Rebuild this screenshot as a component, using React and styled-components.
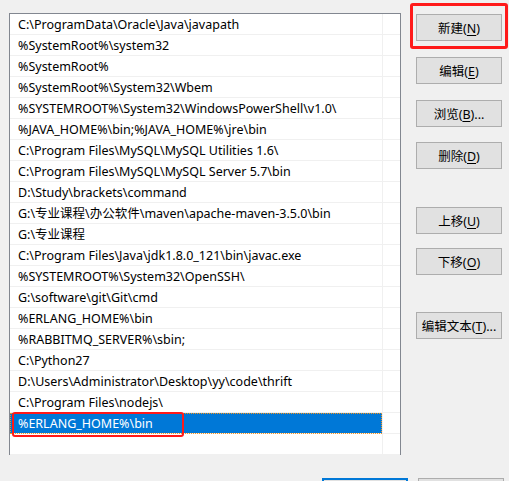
import React from 'react'
import styled, { createGlobalStyle } from 'styled-components'

const GlobalStyle = createGlobalStyle`
  html, body {
    margin: 0;
    background: #f0f0f0;
    overflow: hidden;
  }
  body {
    font-family: "Noto Sans", "Noto Sans CJK SC", sans-serif;
    font-size: 12.5px;
    color: #000;
  }
`;

const Window = styled.div`
  width: 509px;
  height: 481px;
  position: relative;
  display: flex;
  flex-direction: column;
  padding: 13px 0 0 9px;
  box-sizing: border-box;
`;

const Main = styled.div`
  display: flex;
  align-items: flex-start;
`;

const List = styled.div`
  width: 392px;
  height: 442px;
  box-sizing: border-box;
  border: 1px solid #828790;
  background: #fff;
  display: flex;
  flex-direction: column;
  position: relative;
`;

const Row = styled.div`
  display: grid;
  grid-template-columns: 372px 1fr;
  height: 21px;
  flex: none;
`;

const Cell = styled.div`
  box-sizing: border-box;
  height: 21px;
  border-bottom: 1px solid #f0f0f0;
  padding: 1px 0 0 8px;
  line-height: 20px;
  white-space: nowrap;
  overflow: visible;
  background: ${p => (p.$selected ? '#0078d7' : 'transparent')};
  color: ${p => (p.$selected ? '#fff' : '#000')};
  outline: ${p => (p.$selected ? '1px dotted #f7941d' : 'none')};
  outline-offset: -1px;
`;

const Spare = styled.div`
  box-sizing: border-box;
  height: 21px;
  border-left: 1px solid #f0f0f0;
  border-bottom: 1px solid #f0f0f0;
`;

const Tail = styled.div`
  flex: 1;
  display: grid;
  grid-template-columns: 372px 1fr;
  padding-bottom: 2px;
`;

const TailSpare = styled.div`
  border-left: 1px solid #f0f0f0;
  grid-column: 2;
`;

const Side = styled.div`
  display: flex;
  flex-direction: column;
  margin-left: 15px;
  padding-top: 1px;
  position: relative;
`;

const Button = styled.button`
  width: 86px;
  height: 27px;
  box-sizing: border-box;
  background: #e1e1e1;
  border: 1px solid #adadad;
  border-radius: 0;
  font-family: "Noto Sans", "Noto Sans CJK SC", sans-serif;
  font-size: 12.5px;
  color: #000;
  padding: 0;
  margin-top: ${p => p.$gap || 0}px;
  text-decoration: none;

  u {
    text-underline-offset: 2px;
  }
`;

const Footer = styled.div`
  display: flex;
  gap: 10px;
  margin-top: 23px;
  margin-left: 313px;
`;

const FooterButton = styled(Button)`
  height: 26px;
  border: ${p => (p.$primary ? '2px solid #0078d7' : '1px solid #adadad')};
`;

const Mark = styled.div`
  position: absolute;
  border: ${p => p.$w}px solid #ff1a1a;
  border-radius: 3px;
  box-sizing: border-box;
  pointer-events: none;
`;

const NewMark = styled(Mark)`
  left: -6px;
  top: -10px;
  width: 98px;
  height: 46px;
`;

const RowMark = styled(Mark)`
  left: 2px;
  top: 398px;
  width: 172px;
  height: 25px;
`;

const paths = [
  'C:\\ProgramData\\Oracle\\Java\\javapath',
  '%SystemRoot%\\system32',
  '%SystemRoot%',
  '%SystemRoot%\\System32\\Wbem',
  '%SYSTEMROOT%\\System32\\WindowsPowerShell\\v1.0\\',
  '%JAVA_HOME%\\bin;%JAVA_HOME%\\jre\\bin',
  'C:\\Program Files\\MySQL\\MySQL Utilities 1.6\\',
  'C:\\Program Files\\MySQL\\MySQL Server 5.7\\bin',
  'D:\\Study\\brackets\\command',
  'G:\\专业课程\\办公软件\\maven\\apache-maven-3.5.0\\bin',
  'G:\\专业课程',
  'C:\\Program Files\\Java\\jdk1.8.0_121\\bin\\javac.exe',
  '%SYSTEMROOT%\\System32\\OpenSSH\\',
  'G:\\software\\git\\Git\\cmd',
  '%ERLANG_HOME%\\bin',
  '%RABBITMQ_SERVER%\\sbin;',
  'C:\\Python27',
  'D:\\Users\\Administrator\\Desktop\\yy\\code\\thrift',
  'C:\\Program Files\\nodejs\\',
  '%ERLANG_HOME%\\bin',
  '',
];

const buttons = [
  { label: '新建', key: 'N', gap: 0 },
  { label: '编辑', key: 'E', gap: 16 },
  { label: '浏览', key: 'B', gap: 16, more: true },
  { label: '删除', key: 'D', gap: 15 },
  { label: '上移', key: 'U', gap: 38 },
  { label: '下移', key: 'O', gap: 14 },
  { label: '编辑文本', key: 'T', gap: 37, more: true },
];

const App = () => {
  return (
    <Window>
      <GlobalStyle />
      <Main>
        <List>
          {paths.map((p, i) => (
            <Row key={i}>
              <Cell $selected={i === 19}>{p}</Cell>
              <Spare />
            </Row>
          ))}
          <Tail>
            <TailSpare />
          </Tail>
          <RowMark $w={2} />
        </List>
        <Side>
          {buttons.map(b => (
            <Button key={b.key} $gap={b.gap}>
              {b.label}(<u>{b.key}</u>){b.more ? '...' : ''}
            </Button>
          ))}
          <NewMark $w={3} />
        </Side>
      </Main>
      <Footer>
        <FooterButton $primary />
        <FooterButton />
      </Footer>
    </Window>
  )
}

export default App
